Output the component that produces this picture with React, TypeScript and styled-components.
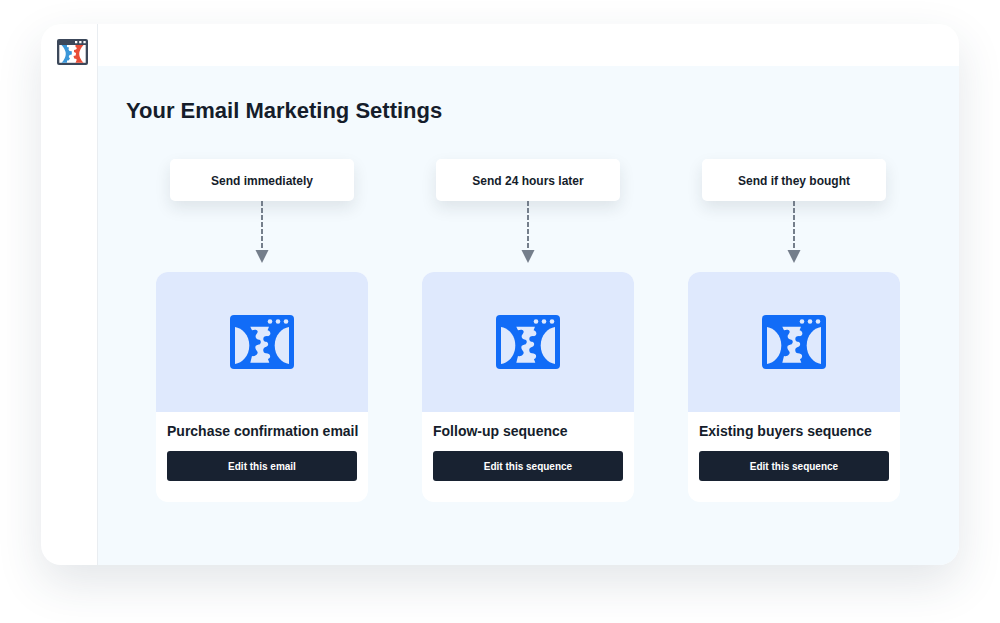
import React from "react";
import styled, { createGlobalStyle } from "styled-components";

const GlobalStyle = createGlobalStyle`
  *, *::before, *::after { box-sizing: border-box; }
  body {
    margin: 0;
    background: #ffffff;
    color: #151d2b;
    font-family: "Liberation Sans", Arial, sans-serif;
  }
  h1, h2, p { margin: 0; }
`;

const Page = styled.div`
  padding: 24px 41px 58px;
`;

const Window = styled.div`
  display: flex;
  border-radius: 20px;
  background: #ffffff;
  box-shadow: 0 18px 46px rgba(36, 62, 88, 0.13);
`;

const Sidebar = styled.nav`
  flex: 0 0 57px;
  padding: 15px 0 0 16px;
  border-right: 1px solid #e9edf1;
`;

const LogoLink = styled.a`
  display: block;
  width: 31px;
  height: 26px;
  svg { display: block; }
`;

const Body = styled.div`
  flex: 1;
  min-width: 0;
`;

const TopBar = styled.header`
  height: 42px;
`;

const Content = styled.main`
  padding: 32px 28px 63px;
  border-bottom-right-radius: 20px;
  background: #f4fafe;
`;

const Heading = styled.h1`
  font-size: 22px;
  line-height: 26px;
  font-weight: 700;
`;

const Columns = styled.div`
  display: grid;
  grid-template-columns: repeat(3, minmax(0, 1fr));
  gap: 54px;
  padding: 35px 31px 0 30px;
`;

const Column = styled.section`
  display: flex;
  flex-direction: column;
  align-items: center;
`;

const Trigger = styled.p`
  align-self: stretch;
  margin: 0 14px;
  padding-top: 2px;
  border-radius: 5px;
  background: #ffffff;
  box-shadow: 0 7px 16px rgba(26, 36, 52, 0.1);
  font-size: 12px;
  line-height: 40px;
  font-weight: 700;
  text-align: center;
`;

const Arrow = styled.svg`
  display: block;
  width: 14px;
  height: 62px;
  margin-bottom: 9px;
`;

const Card = styled.article`
  align-self: stretch;
  overflow: hidden;
  border-radius: 12px;
  background: #ffffff;
`;

const Cover = styled.div`
  display: flex;
  align-items: center;
  justify-content: center;
  height: 140px;
  background: #dfe9fd;
`;

const CardBody = styled.div`
  padding: 11px 11px 21px;
`;

const CardTitle = styled.h2`
  font-size: 14px;
  line-height: 16px;
  font-weight: 700;
  white-space: nowrap;
`;

const EditButton = styled.button`
  display: block;
  width: 100%;
  height: 30px;
  margin-top: 12px;
  padding: 2px 0 0;
  border: 0;
  border-radius: 3px;
  background: #182231;
  color: #ffffff;
  font: 700 10px/28px "Liberation Sans", Arial, sans-serif;
  cursor: pointer;
`;

const BrandLogo = () => (
  <svg width="31" height="26" viewBox="0 0 31 26" aria-hidden="true">
    <rect width="31" height="26" rx="2" fill="#3c485a" />
    <path d="M2.300 6H28.700V23.800H2.300Z" fill="#fff" />
    <path d="M4.500 6H10V8L12 8.500L11.500 10.500L12.500 12L14.800 12.200V15.500L12.500 16L11.700 18L13 19.500L11.500 21.400L10 21.500V23.800H4.500Q13 15 4.500 6Z" fill="#3b97d9" />
    <path d="M26.500 6H18.500V8L20 9L19 10.500L17 11V13L19 14L18.700 16.500L16.500 17L17.200 19.600L19.500 20V21.500L18.500 23.800H26.500Q18 15 26.500 6Z" fill="#e94e38" />
    <path d="M18 2h2.300v2.300h-2.300zM22.200 2h2.300v2.300h-2.300zM26.400 2h2.300v2.300h-2.300z" fill="#fff" />
  </svg>
);

const CoverLogo = () => (
  <svg width="64" height="54" viewBox="0 0 64 54" aria-hidden="true">
    <rect width="64" height="54" rx="4" fill="#116cf7" />
    <g fill="#dfe9fd">
      <circle cx="40" cy="6.500" r="2.300" />
      <circle cx="48" cy="6.500" r="2.300" />
      <circle cx="56" cy="6.500" r="2.300" />
      <path d="M5 12C12 13 19.300 20 19.300 30.500C19.300 41 12 48 5 49Z" />
      <path d="M59 12C52 13 44.700 20 44.700 30.500C44.700 41 52 48 59 49Z" />
      <path
        transform="translate(-2 -2.500) scale(0.333)"
        d="M67 43H123L119 53C130 56 130 69 120 71C110 70 106 74 106 80C107 86 110 87 115 88C123 91 122 101 115 103C108 105 105 109 106 115C107 122 112 123 119 123C129 125 129 137 120 140L124 151H67L72 131C80 132 90 127 89 119C87 114 82 111 82 104C83 97 89 98 94 96C100 92 100 84 94 82C87 81 82 77 83 70C84 66 90 62 89 56C86 50 79 51 72 53Z"
      />
    </g>
  </svg>
);

const DownArrow = () => (
  <Arrow viewBox="0 0 14 62" aria-hidden="true">
    <path d="M7 0V50" stroke="#747e8b" strokeWidth="2" strokeDasharray="5 2" />
    <path d="M0.500 49H13.500L7 62Z" fill="#747e8b" />
  </Arrow>
);

const steps = [
  { trigger: "Send immediately", title: "Purchase confirmation email", action: "Edit this email" },
  { trigger: "Send 24 hours later", title: "Follow-up sequence", action: "Edit this sequence" },
  { trigger: "Send if they bought", title: "Existing buyers sequence", action: "Edit this sequence" },
];

export default function App() {
  return (
    <Page>
      <GlobalStyle />
      <Window>
        <Sidebar>
          <LogoLink href="#" aria-label="Home"><BrandLogo /></LogoLink>
        </Sidebar>
        <Body>
          <TopBar />
          <Content>
            <Heading>Your Email Marketing Settings</Heading>
            <Columns>
              {steps.map((step) => (
                <Column key={step.title}>
                  <Trigger>{step.trigger}</Trigger>
                  <DownArrow />
                  <Card>
                    <Cover><CoverLogo /></Cover>
                    <CardBody>
                      <CardTitle>{step.title}</CardTitle>
                      <EditButton type="button">{step.action}</EditButton>
                    </CardBody>
                  </Card>
                </Column>
              ))}
            </Columns>
          </Content>
        </Body>
      </Window>
    </Page>
  );
}
